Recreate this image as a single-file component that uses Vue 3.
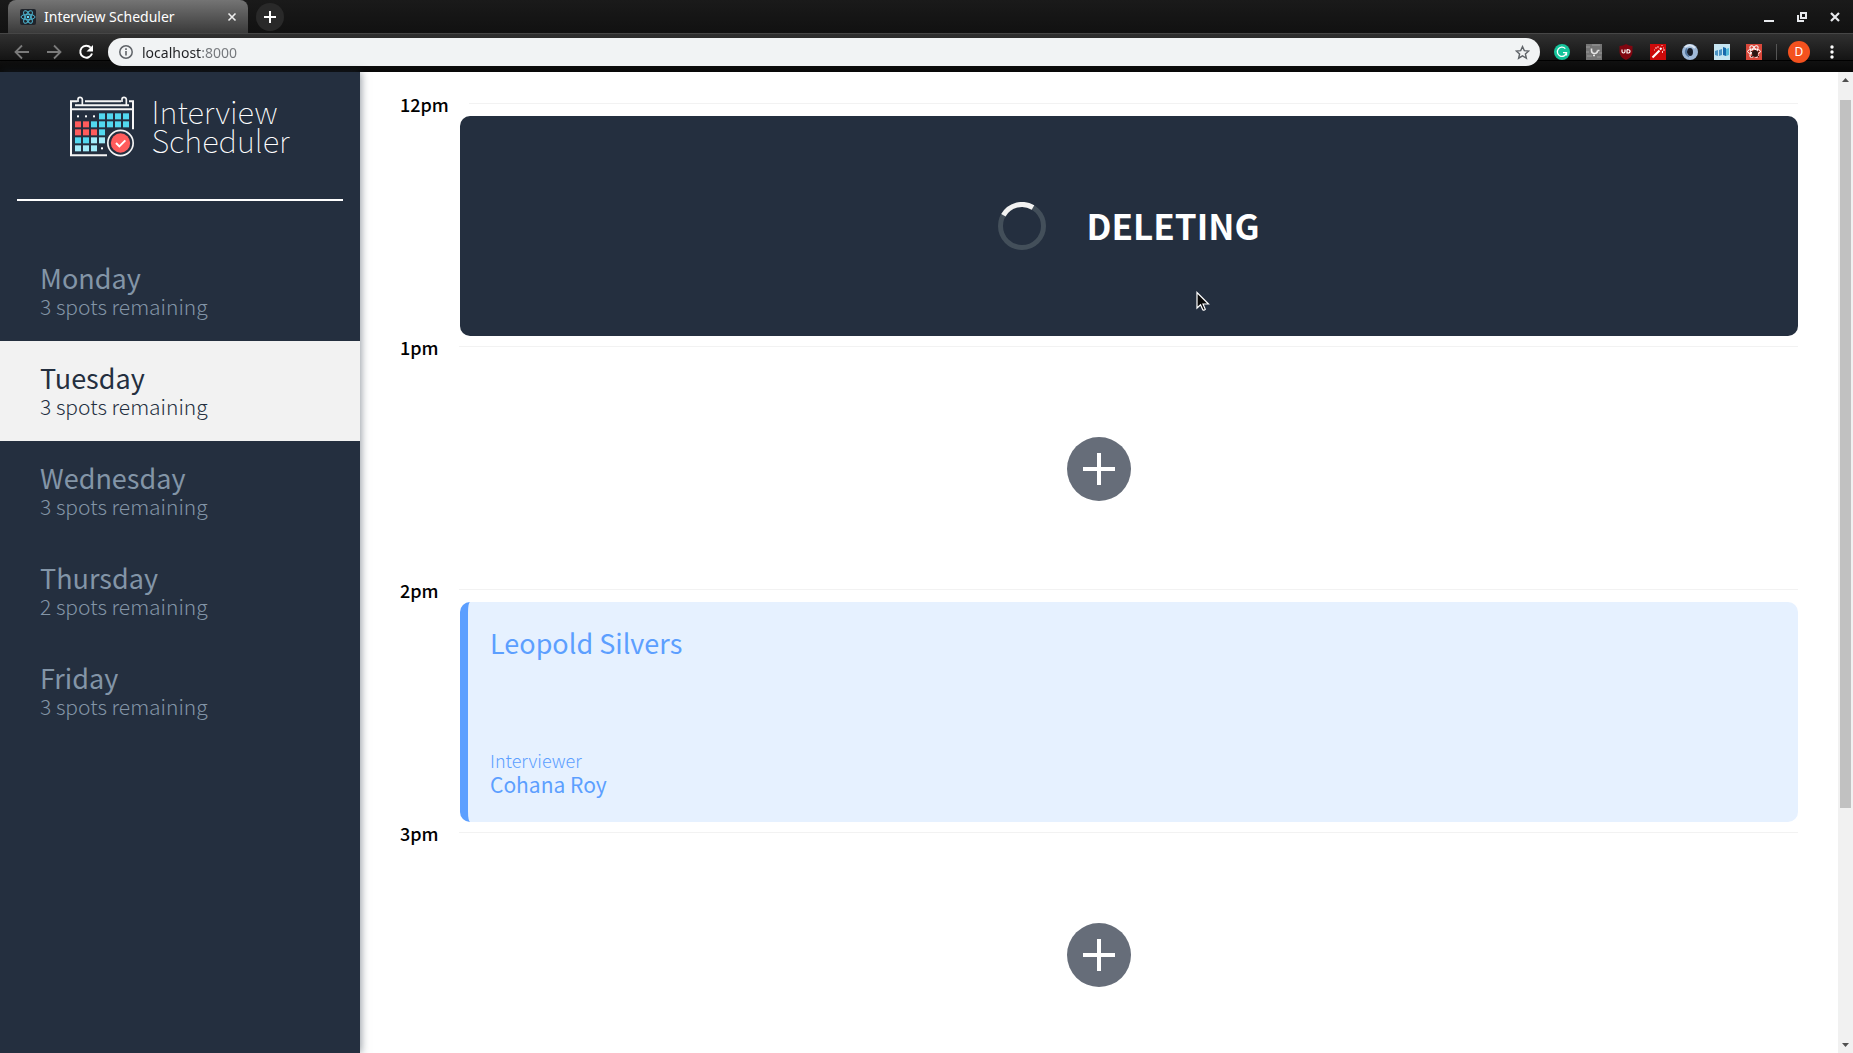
<script setup>
import { ref } from 'vue'

const days = ref([
  { name: 'Monday', spots: 3 },
  { name: 'Tuesday', spots: 3 },
  { name: 'Wednesday', spots: 3 },
  { name: 'Thursday', spots: 2 },
  { name: 'Friday', spots: 3 }
])
const selected = ref('Tuesday')
const url = ref('localhost:8000')

const slots = [
  { time: '12pm', mode: 'deleting' },
  { time: '1pm', mode: 'empty' },
  { time: '2pm', mode: 'show', student: 'Leopold Silvers', interviewer: 'Cohana Roy' },
  { time: '3pm', mode: 'empty' }
]

const colors = { r: '#ff5c5c', c: '#52d9f0', p: '#a3ecfa' }
const cells = ['...cccc', 'rrccccc', 'rrrc', 'ccpp', 'ppp.'].flatMap((row, j) =>
  [...row].map((kind, i) => {
    const dot = kind === '.'
    return {
      x: 75 + i * 24 + (dot ? 6 : 0),
      y: 102 + j * 24 + (dot ? 6 : 0),
      size: dot ? 6 : 18,
      fill: dot ? '#fff' : colors[kind]
    }
  })
)
</script>

<template>
  <div class="window">
    <header class="browser">
      <div class="tabs">
        <div class="tab">
          <svg class="favicon" width="16" height="16" viewBox="0 0 16 16">
            <rect width="16" height="16" rx="2" fill="#20242b" />
            <g fill="none" stroke="#4db5d0" stroke-width="1">
              <ellipse cx="8" cy="8" rx="7" ry="2.7" />
              <ellipse cx="8" cy="8" rx="7" ry="2.7" transform="rotate(60 8 8)" />
              <ellipse cx="8" cy="8" rx="7" ry="2.7" transform="rotate(120 8 8)" />
            </g>
            <circle cx="8" cy="8" r="1.3" fill="#61dafb" />
          </svg>
          <span class="tab-title">Interview Scheduler</span>
          <button class="icon-btn" aria-label="Close tab">
            <svg width="10" height="10" viewBox="0 0 10 10"><path d="M1.5 1.5l7 7M8.5 1.5l-7 7" stroke="#eee" stroke-width="1.6" /></svg>
          </button>
        </div>
        <button class="new-tab" aria-label="New tab">
          <svg width="12" height="12" viewBox="0 0 12 12"><path d="M6 0v12M0 6h12" stroke="#fff" stroke-width="2" /></svg>
        </button>
        <div class="controls">
          <button class="icon-btn" aria-label="Minimize">
            <svg width="10" height="12" viewBox="0 0 10 12"><path d="M0 10h10" stroke="#e8eaed" stroke-width="2" /></svg>
          </button>
          <button class="icon-btn" aria-label="Restore">
            <svg width="10" height="10" viewBox="0 0 10 10"><path d="M4 1h5v5H4zM1 3v6h6" fill="none" stroke="#e8eaed" stroke-width="2" /></svg>
          </button>
          <button class="icon-btn" aria-label="Close window">
            <svg width="10" height="10" viewBox="0 0 10 10"><path d="M1 1l8 8M9 1l-8 8" stroke="#e8eaed" stroke-width="2.2" /></svg>
          </button>
        </div>
      </div>
      <div class="toolbar">
        <div class="nav-buttons">
          <button class="icon-btn" aria-label="Back">
            <svg width="16" height="16" viewBox="0 0 16 16"><path d="M15 8H2M8 1.5L1.5 8 8 14.5" fill="none" stroke="#7b7b7b" stroke-width="1.8" /></svg>
          </button>
          <button class="icon-btn" aria-label="Forward">
            <svg width="16" height="16" viewBox="0 0 16 16"><path d="M1 8h13M8 1.5L14.5 8 8 14.5" fill="none" stroke="#7b7b7b" stroke-width="1.8" /></svg>
          </button>
          <button class="icon-btn" aria-label="Reload">
            <svg width="16" height="16" viewBox="0 0 16 16"><path d="M12.7 3.6A6 6 0 1 0 14 9.5" fill="none" stroke="#fff" stroke-width="2" /><path d="M15 1v6.5H8.5z" fill="#fff" /></svg>
          </button>
        </div>
        <div class="omnibox">
          <svg width="14" height="14" viewBox="0 0 14 14"><circle cx="7" cy="7" r="6.2" fill="none" stroke="#5f6368" stroke-width="1.5" /><path d="M7 6v4.5M7 3.3v1.6" stroke="#5f6368" stroke-width="1.6" /></svg>
          <input v-model="url" class="url" type="text" aria-label="Address" spellcheck="false" />
          <button class="icon-btn" aria-label="Bookmark">
            <svg width="15" height="15" viewBox="0 0 15 15"><path d="M7.5 1.6l1.8 4 4.4.4-3.3 2.9 1 4.3-3.9-2.3-3.9 2.3 1-4.3L1.3 6l4.4-.4z" fill="none" stroke="#5f6368" stroke-width="1.4" /></svg>
          </button>
        </div>
        <div class="extensions">
          <svg width="16" height="16" viewBox="0 0 16 16"><circle cx="8" cy="8" r="8" fill="#15c39a" /><path d="M11.3 4.6A4.6 4.6 0 1 0 12.5 8.7H9M12.5 8.7v2.8" fill="none" stroke="#fff" stroke-width="1.3" /></svg>
          <svg width="16" height="16" viewBox="0 0 16 16"><rect width="16" height="16" fill="#747474" /><path d="M0 3h4M6 1h8M1 12h5M11 13h4M0 8h3M13 9h3" stroke="#999" /><path d="M5.5 4.5v2q0 3 3 3t3-3M11.5 6.5h2M7 11.5h2" fill="none" stroke="#e4e4e4" stroke-width="1.6" /></svg>
          <svg width="16" height="16" viewBox="0 0 16 16"><path d="M8 0q3 2 6.5 2v6q0 5-6.5 8-6.5-3-6.5-8V2Q5 2 8 0z" fill="#800610" /><path d="M4 5.5v2q0 1.5 1.5 1.5T7 7.500v-2M9 5.500V9q3 .2 3-1.700T9 5.500" fill="none" stroke="#fff" stroke-width="1.2" /></svg>
          <svg width="16" height="16" viewBox="0 0 16 16"><rect width="16" height="16" fill="#cc0a0a" /><path d="M2.5 13.5l7-7" stroke="#fff" stroke-width="2.2" /><path d="M10 5.5l1.5-1.5" stroke="#fff" stroke-width="2" /><path d="M8 2v2M5 4h2M12 1v1M14 4h-1M12.5 7v2M4 6h1M13 6h2" stroke="#ffc8c8" /></svg>
          <svg width="16" height="16" viewBox="0 0 16 16"><circle cx="8" cy="8" r="8" fill="#9fb9d8" /><path d="M3 3Q8-1 13 4" fill="none" stroke="#dce7f3" stroke-width="2" /><ellipse cx="8" cy="8" rx="3" ry="4" fill="#171d29" /><path d="M5 4.5q-3 5 2 8" fill="none" stroke="#54779f" stroke-width="2" /></svg>
          <svg width="16" height="16" viewBox="0 0 16 16"><rect width="16" height="16" fill="#c6e5f1" /><path d="M1 7l3-1v6l-3-1zM5 6l3-1v6l-3 1z" fill="#4a93c4" /><path d="M9 3l3 1v8l-3-1z" fill="#1769ac" /><path d="M12 5l3-1v7l-3 1z" fill="#54bad8" /></svg>
          <svg width="16" height="16" viewBox="0 0 16 16"><rect width="16" height="16" fill="#d9483b" /><g fill="none" stroke="#fff"><ellipse cx="8" cy="7.5" rx="6.5" ry="2.5" /><ellipse cx="8" cy="7.5" rx="6.5" ry="2.5" transform="rotate(60 8 7.5)" /><ellipse cx="8" cy="7.5" rx="6.5" ry="2.5" transform="rotate(120 8 7.5)" /></g><ellipse cx="9" cy="9.5" rx="3" ry="3.5" fill="#2c1512" /><path d="M5 7l8 6M13 7l-8 6" stroke="#2c1512" /></svg>
        </div>
        <span class="separator"></span>
        <button class="avatar" aria-label="Profile">D</button>
        <button class="icon-btn menu" aria-label="Menu">
          <svg width="4" height="14" viewBox="0 0 4 14" fill="#fff"><circle cx="2" cy="2" r="1.7" /><circle cx="2" cy="7" r="1.7" /><circle cx="2" cy="12" r="1.7" /></svg>
        </button>
      </div>
    </header>

    <div class="page">
      <aside class="sidebar">
        <div class="logo">
          <svg width="64" height="61" viewBox="60 50 192 183">
            <g fill="none" stroke="#f5f5f5" stroke-width="6">
              <path d="M82 66H63V228H171M105 66H213M237 66H249V150M75 78H99M99 78H237M63 90H249" />
              <path d="M84 68V60Q84 54 90 54T97 60V78M216 68V60Q216 54 222 54T229 60V78" stroke-width="5" />
            </g>
            <rect v-for="(c, i) in cells" :key="i" :x="c.x" :y="c.y" :width="c.size" :height="c.size" :fill="c.fill" />
            <circle cx="211.5" cy="191" r="38" fill="#242f3f" stroke="#f5f5f5" stroke-width="5" />
            <circle cx="211.5" cy="191" r="29" fill="#ff5c5c" />
            <path d="M198 191l10 10 18-18" fill="none" stroke="#fff" stroke-width="6" />
          </svg>
          <h1>Interview<br />Scheduler</h1>
        </div>
        <hr class="divider" />
        <nav>
          <ul class="days">
            <li v-for="day in days" :key="day.name">
              <button class="day" :class="{ selected: day.name === selected }" @click="selected = day.name">
                <span class="day-name">{{ day.name }}</span>
                <span class="day-spots">{{ day.spots }} spots remaining</span>
              </button>
            </li>
          </ul>
        </nav>
      </aside>

      <main class="schedule">
        <article v-for="slot in slots" :key="slot.time" class="slot">
          <header class="slot-head">
            <h4>{{ slot.time }}</h4>
            <hr />
          </header>
          <div v-if="slot.mode === 'deleting'" class="card status">
            <svg class="spinner" width="48" height="48" viewBox="0 0 48 48" fill="none" stroke-width="5">
              <circle cx="24" cy="24" r="21.5" stroke="#434f5a" />
              <path d="M5.4 13.2A21.5 21.5 0 0 1 35 5.5" stroke="#f2f2f2" />
            </svg>
            <h2>DELETING</h2>
            <svg class="pointer" width="14" height="21" viewBox="0 0 14 21"><path d="M1 1.5V17l3.5-3.3 2.3 5.1q1.2 1 2.5-.5L7 13h5.5z" fill="#0a0a0a" stroke="#fff" stroke-width="1.2" /></svg>
          </div>
          <div v-else-if="slot.mode === 'show'" class="card appointment">
            <h2>{{ slot.student }}</h2>
            <div>
              <h4>Interviewer</h4>
              <h3>{{ slot.interviewer }}</h3>
            </div>
          </div>
          <div v-else class="empty">
            <button class="add" aria-label="Add appointment">
              <svg width="32" height="32" viewBox="0 0 32 32"><path d="M16 0v32M0 16h32" stroke="#fff" stroke-width="4" /></svg>
            </button>
          </div>
        </article>
      </main>

      <div class="scrollbar">
        <svg width="7" height="4" viewBox="0 0 7 4"><path d="M0 4L3.5 0 7 4z" fill="#505050" /></svg>
        <div class="track"><div class="thumb"></div></div>
        <svg width="7" height="4" viewBox="0 0 7 4"><path d="M0 0h7L3.5 4z" fill="#505050" /></svg>
      </div>
    </div>
  </div>
</template>

<style>
body {
  margin: 0;
  background: #fff;
}
</style>

<style scoped>
.window {
  display: flex;
  flex-direction: column;
  height: 100vh;
  overflow: hidden;
  font-family: "Noto Sans CJK SC", "Noto Sans", sans-serif;
}
h1, h2, h3, h4, ul, hr {
  margin: 0;
  padding: 0;
}
hr {
  border: 0;
}
svg {
  display: block;
  flex: none;
}
button {
  font: inherit;
  border: 0;
  padding: 0;
  cursor: pointer;
}
.icon-btn {
  background: none;
  display: flex;
}

/* Browser frame */
.browser {
  flex: none;
  background: #151515;
  font-family: "Noto Sans", sans-serif;
}
.tabs {
  display: flex;
  align-items: center;
  height: 33px;
  padding: 0 13px 0 8px;
  background: linear-gradient(#1a1a1a, #111);
}
.tab {
  display: flex;
  align-items: center;
  box-sizing: border-box;
  width: 240px;
  height: 33px;
  padding: 0 11px 0 12px;
  border-radius: 8px 8px 0 0;
  background: linear-gradient(#747474, #3a3a3a);
}
.tab-title {
  flex: 1;
  margin-left: 8px;
  font-size: 14px;
  line-height: 20px;
  color: #fff;
}
.new-tab {
  display: flex;
  align-items: center;
  justify-content: center;
  width: 28px;
  height: 28px;
  margin-left: 8px;
  border-radius: 50%;
  background: #292929;
}
.controls {
  display: flex;
  align-items: center;
  gap: 23px;
  margin-left: auto;
}
.toolbar {
  display: flex;
  align-items: center;
  box-sizing: border-box;
  height: 39px;
  padding: 0 19px 2px 14px;
  border-top: 1px solid #464646;
  background: linear-gradient(#303030, #141414 26px, #000 26px, #000 27px, #101010 27px, #080808);
}
.nav-buttons {
  display: flex;
  gap: 16px;
}
.omnibox {
  flex: 1;
  display: flex;
  align-items: center;
  box-sizing: border-box;
  height: 28px;
  margin-left: 14px;
  padding: 0 10px 0 11px;
  border-radius: 14px;
  background: #f1f3f4;
}
.url {
  flex: 1;
  min-width: 0;
  height: 20px;
  margin-left: 9px;
  padding: 0;
  border: 0;
  outline: 0;
  font-family: "Noto Sans", sans-serif;
  font-size: 14px;
  color: transparent;
  background: linear-gradient(to right, #202124 59px, #73767a 59px);
  -webkit-background-clip: text;
  background-clip: text;
}
.extensions {
  display: flex;
  gap: 16px;
  margin-left: 14px;
}
.separator {
  width: 1px;
  height: 16px;
  margin-left: 14px;
  background: #555;
}
.avatar {
  width: 22px;
  height: 22px;
  margin-left: 11px;
  border-radius: 50%;
  background: #f4511e;
  color: #fff;
  font-size: 12px;
  line-height: 22px;
}
.menu {
  margin-left: 20px;
}

/* Page */
.page {
  flex: 1;
  display: flex;
  min-height: 0;
}
.sidebar {
  position: relative;
  flex: none;
  width: 360px;
  background: #242f3f;
  box-shadow: 1px 0 8px rgba(34, 47, 62, 0.5);
}
.logo {
  display: flex;
  justify-content: center;
  gap: 17px;
  height: 103px;
  padding-top: 24px;
}
.logo h1 {
  font-size: 31px;
  line-height: 29px;
  font-weight: 100;
  color: #fff;
}
.divider {
  height: 2px;
  margin: 0 17px;
  background: #fff;
}
.days {
  margin-top: 40px;
  list-style: none;
}
.day {
  display: flex;
  flex-direction: column;
  width: 100%;
  padding: 21px 40px 23px;
  background: none;
  color: #8395a7;
  text-align: left;
}
.day.selected {
  background: #f2f2f2;
  color: #242f3f;
}
.day-name {
  font-size: 27px;
  line-height: 32px;
}
.day-spots {
  font-size: 21px;
  line-height: 24px;
  font-weight: 300;
}

/* Schedule */
.schedule {
  flex: 1;
  overflow: hidden;
  padding: 21px 40px 0;
}
.slot-head {
  display: flex;
  align-items: center;
  gap: 20px;
  height: 23px;
}
.slot-head h4 {
  font-size: 18px;
  line-height: 23px;
  font-weight: 500;
  color: #000;
}
.slot-head hr {
  flex: 1;
  height: 1px;
  margin-bottom: 2px;
  background: #f2f2f2;
}
.card {
  position: relative;
  display: flex;
  box-sizing: border-box;
  height: 220px;
  margin-left: 60px;
  border-radius: 10px;
}
.status {
  align-items: center;
  justify-content: center;
  gap: 40px;
  background: #242f3f;
}
.status h2 {
  margin-bottom: 2px;
  font-size: 35px;
  line-height: 44px;
  font-weight: 700;
  color: #fff;
}
.pointer {
  position: absolute;
  left: 55%;
  top: 175px;
}
.appointment {
  flex-direction: column;
  justify-content: space-between;
  padding: 21px 22px 26px;
  border-left: 8px solid #5c9fff;
  background: #e6f1ff;
  color: #5c9fff;
}
.appointment h2 {
  font-size: 27px;
  line-height: 40px;
  font-weight: 400;
}
.appointment h4 {
  font-size: 18px;
  line-height: 24px;
  font-weight: 300;
}
.appointment h3 {
  font-size: 21px;
  line-height: 24px;
  font-weight: 400;
}
.empty {
  display: flex;
  align-items: center;
  justify-content: center;
  height: 220px;
}
.add {
  display: flex;
  align-items: center;
  justify-content: center;
  width: 64px;
  height: 64px;
  border-radius: 50%;
  background: #666d79;
}
.scrollbar {
  flex: none;
  display: flex;
  flex-direction: column;
  align-items: center;
  gap: 18px;
  box-sizing: border-box;
  width: 15px;
  padding: 6px 0;
  background: #f1f1f1;
}
.track {
  flex: 1;
}
.thumb {
  width: 11px;
  height: 76.5%;
  background: #c1c1c1;
}
</style>
